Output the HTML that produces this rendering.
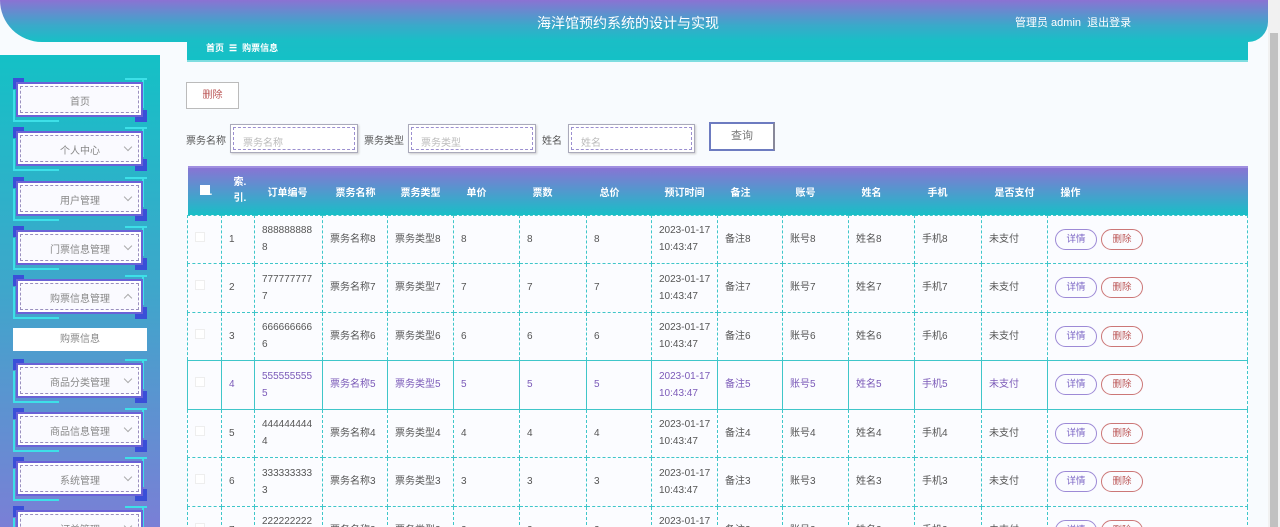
<!DOCTYPE html>
<html><head><meta charset="utf-8"><style>
*{margin:0;padding:0;box-sizing:border-box}
html{width:1280px;height:527px;overflow:hidden}
body{width:1280px;height:527px;overflow:hidden;background:#f8fbfe;font-family:"Liberation Sans","Noto Sans CJK SC",sans-serif;position:relative;font-size:11px;color:#555}
.hdr{position:absolute;left:0;top:0;width:1268px;height:62px;}
.hdr .top{position:absolute;left:0;top:0;width:1268px;height:42px;background:linear-gradient(#8b72d3,#3aa9ca 60%,#17c0c6);border-radius:0 0 20px 42px}
.hdr .crumbbar{position:absolute;left:187px;top:30px;width:1061px;height:32px;background:linear-gradient(#1fbbc6,#14c1c6);border-bottom:2px solid #7fdde0}
.title{position:absolute;left:0;width:1256px;top:13px;text-align:center;color:#fff;font-size:14px}
.user{position:absolute;left:1015px;top:14px;color:#fff;font-size:11px}
.crumb{position:absolute;left:206px;top:41px;color:#fff;font-size:9px;font-weight:bold}
.side{position:absolute;left:0;top:55px;width:160px;height:472px;background:linear-gradient(#14c1c6,#3fa6cb 50%,#7a7fd6)}
.mi{position:absolute;left:13px;width:134px;height:44px}
.mi .b{position:absolute;left:3px;top:4px;width:127px;height:35px;background:#fafaff;border:2px solid #6b62d6;box-shadow:inset 0 0 0 2px #fff}
.mi .b i{position:absolute;left:2px;top:2px;right:2px;bottom:2px;border:1px dashed #9a8fbf}
.mi .t{position:absolute;left:0;width:134px;top:15px;text-align:center;color:#888;font-size:10px}
.mi .ar{position:absolute;right:16px;top:17px;width:6px;height:6px;border-right:1px solid #aaa;border-bottom:1px solid #aaa;transform:rotate(45deg)}
.mi .ar.up{top:20px;transform:rotate(-135deg)}
.mi .c1{position:absolute;left:0;top:0;width:11px;height:11px;background:#3a4fd8}
.mi .c2{position:absolute;right:0;bottom:0;width:12px;height:12px;background:#3a4fd8}
.mi .l1{position:absolute;left:0;top:12px;width:2px;height:32px;background:#3de0e8}
.mi .l2{position:absolute;left:0;bottom:0;width:46px;height:2px;background:#3de0e8}
.mi .l3{position:absolute;right:0;top:0;width:22px;height:2px;background:#3de0e8}
.mi .l4{position:absolute;right:3px;top:0;width:2px;height:30px;background:#3de0e8}
.sub{position:absolute;left:13px;top:328px;width:134px;height:23px;background:#fff;text-align:center;line-height:23px;color:#888;font-size:10px}
.btn{position:absolute;background:#fff;border:1px solid #bbb;text-align:center}
.lbl{position:absolute;top:132px;font-size:10px;color:#555}
.inp{position:absolute;top:124px;height:29px;border:1px solid #aab;box-shadow:1px 1px 2px #ccc;background:#fff}
.inp i{position:absolute;left:2px;top:2px;right:2px;bottom:2px;border:1px dashed #9b8fd0;font-style:normal;color:#bbb;font-size:10px;padding:6px 9px}
table{position:absolute;left:187px;top:166px;border-collapse:collapse;width:1061px;table-layout:fixed}
th{height:48px;color:#fff;font-size:10px;text-align:left;padding-left:13px;background:linear-gradient(#8874d4,#18bfc7);border-top:2px solid #a08fe0;font-weight:bold}
td{height:48.5px;border:1px dashed #3fc6c9;font-size:10px;color:#555;padding-left:7px;line-height:17px;background:#fbfcff}
tr.hl td{border-top:1px solid #3fc6c9;border-bottom:1px solid #3fc6c9;border-left:1px solid #3fc6c9;color:#7b5ab8}
.cb{display:inline-block;width:10px;height:10px;border:1px solid #eee;background:#fff}
.pb{display:inline-block;width:42px;height:21px;border-radius:11px;text-align:center;line-height:19px;margin-right:2px;font-size:9.5px}
.d{border:1px solid #9d8ad6;color:#7a64c4}.r{border:1px solid #c77;color:#b55;margin-left:2px}
.sb{position:absolute;left:1268px;top:0;width:12px;height:527px;background:#f1f1f1}
.sb i{position:absolute;left:2px;top:33px;width:8px;height:494px;background:#c1c1c1}
</style></head><body>
<div class="hdr"><div class="crumbbar"></div><div class="top"></div></div>
<div class="title">海洋馆预约系统的设计与实现</div>
<div class="user">管理员 admin &nbsp;退出登录</div>
<div class="crumb">首页 &nbsp;☰ &nbsp;购票信息</div>
<div class="side"></div>
<div class="mi" style="top:78px"><div class="c1"></div><div class="c2"></div><div class="l1"></div><div class="l2"></div><div class="l3"></div><div class="l4"></div><div class="b"><i></i></div><div class="t">首页</div></div>
<div class="mi" style="top:127px"><div class="c1"></div><div class="c2"></div><div class="l1"></div><div class="l2"></div><div class="l3"></div><div class="l4"></div><div class="b"><i></i></div><div class="t">个人中心</div><div class="ar"></div></div>
<div class="mi" style="top:177px"><div class="c1"></div><div class="c2"></div><div class="l1"></div><div class="l2"></div><div class="l3"></div><div class="l4"></div><div class="b"><i></i></div><div class="t">用户管理</div><div class="ar"></div></div>
<div class="mi" style="top:226px"><div class="c1"></div><div class="c2"></div><div class="l1"></div><div class="l2"></div><div class="l3"></div><div class="l4"></div><div class="b"><i></i></div><div class="t">门票信息管理</div><div class="ar"></div></div>
<div class="mi" style="top:275px"><div class="c1"></div><div class="c2"></div><div class="l1"></div><div class="l2"></div><div class="l3"></div><div class="l4"></div><div class="b"><i></i></div><div class="t">购票信息管理</div><div class="ar up"></div></div>
<div class="sub">购票信息</div>
<div class="mi" style="top:359px"><div class="c1"></div><div class="c2"></div><div class="l1"></div><div class="l2"></div><div class="l3"></div><div class="l4"></div><div class="b"><i></i></div><div class="t">商品分类管理</div><div class="ar"></div></div>
<div class="mi" style="top:408px"><div class="c1"></div><div class="c2"></div><div class="l1"></div><div class="l2"></div><div class="l3"></div><div class="l4"></div><div class="b"><i></i></div><div class="t">商品信息管理</div><div class="ar"></div></div>
<div class="mi" style="top:457px"><div class="c1"></div><div class="c2"></div><div class="l1"></div><div class="l2"></div><div class="l3"></div><div class="l4"></div><div class="b"><i></i></div><div class="t">系统管理</div><div class="ar"></div></div>
<div class="mi" style="top:506px"><div class="c1"></div><div class="c2"></div><div class="l1"></div><div class="l2"></div><div class="l3"></div><div class="l4"></div><div class="b"><i></i></div><div class="t">订单管理</div><div class="ar"></div></div>

<div class="btn" style="left:186px;top:82px;width:53px;height:27px;line-height:25px;color:#b55;font-size:10px">删除</div>
<div class="lbl" style="left:186px">票务名称</div>
<div class="inp" style="left:230px;width:128px"><i>票务名称</i></div>
<div class="lbl" style="left:364px">票务类型</div>
<div class="inp" style="left:408px;width:128px"><i>票务类型</i></div>
<div class="lbl" style="left:542px">姓名</div>
<div class="inp" style="left:568px;width:127px"><i>姓名</i></div>
<div class="btn" style="left:709px;top:122px;width:66px;height:29px;line-height:25px;border:2px solid #6d7bc0;border-right-color:#889;color:#777;font-size:11px">查询</div>

<table>
<colgroup><col style="width:34px"><col style="width:33px"><col style="width:68px"><col style="width:65px"><col style="width:66px"><col style="width:66px"><col style="width:67px"><col style="width:65px"><col style="width:66px"><col style="width:65px"><col style="width:66px"><col style="width:66px"><col style="width:67px"><col style="width:66px"><col></colgroup>
<tr><th style="padding-left:12px"><span class="cb" style="border:none"></span>.</th><th style="padding-left:12px;line-height:16px">索.<br>引.</th><th>订单编号</th><th>票务名称</th><th>票务类型</th><th>单价</th><th>票数</th><th>总价</th><th>预订时间</th><th>备注</th><th>账号</th><th>姓名</th><th>手机</th><th>是否支付</th><th>操作</th></tr>
<tr><td><span class="cb"></span></td><td>1</td><td>888888888<br>8</td><td>票务名称8</td><td>票务类型8</td><td>8</td><td>8</td><td>8</td><td>2023-01-17<br>10:43:47</td><td>备注8</td><td>账号8</td><td>姓名8</td><td>手机8</td><td>未支付</td><td><span class="pb d">详情</span><span class="pb r">删除</span></td></tr>
<tr><td><span class="cb"></span></td><td>2</td><td>777777777<br>7</td><td>票务名称7</td><td>票务类型7</td><td>7</td><td>7</td><td>7</td><td>2023-01-17<br>10:43:47</td><td>备注7</td><td>账号7</td><td>姓名7</td><td>手机7</td><td>未支付</td><td><span class="pb d">详情</span><span class="pb r">删除</span></td></tr>
<tr><td><span class="cb"></span></td><td>3</td><td>666666666<br>6</td><td>票务名称6</td><td>票务类型6</td><td>6</td><td>6</td><td>6</td><td>2023-01-17<br>10:43:47</td><td>备注6</td><td>账号6</td><td>姓名6</td><td>手机6</td><td>未支付</td><td><span class="pb d">详情</span><span class="pb r">删除</span></td></tr>
<tr class="hl"><td><span class="cb"></span></td><td>4</td><td>555555555<br>5</td><td>票务名称5</td><td>票务类型5</td><td>5</td><td>5</td><td>5</td><td>2023-01-17<br>10:43:47</td><td>备注5</td><td>账号5</td><td>姓名5</td><td>手机5</td><td>未支付</td><td><span class="pb d">详情</span><span class="pb r">删除</span></td></tr>
<tr><td><span class="cb"></span></td><td>5</td><td>444444444<br>4</td><td>票务名称4</td><td>票务类型4</td><td>4</td><td>4</td><td>4</td><td>2023-01-17<br>10:43:47</td><td>备注4</td><td>账号4</td><td>姓名4</td><td>手机4</td><td>未支付</td><td><span class="pb d">详情</span><span class="pb r">删除</span></td></tr>
<tr><td><span class="cb"></span></td><td>6</td><td>333333333<br>3</td><td>票务名称3</td><td>票务类型3</td><td>3</td><td>3</td><td>3</td><td>2023-01-17<br>10:43:47</td><td>备注3</td><td>账号3</td><td>姓名3</td><td>手机3</td><td>未支付</td><td><span class="pb d">详情</span><span class="pb r">删除</span></td></tr>
<tr><td><span class="cb"></span></td><td>7</td><td>222222222<br>2</td><td>票务名称2</td><td>票务类型2</td><td>2</td><td>2</td><td>2</td><td>2023-01-17<br>10:43:47</td><td>备注2</td><td>账号2</td><td>姓名2</td><td>手机2</td><td>未支付</td><td><span class="pb d">详情</span><span class="pb r">删除</span></td></tr>
</table>
<div class="sb"><i></i></div>
</body></html>
